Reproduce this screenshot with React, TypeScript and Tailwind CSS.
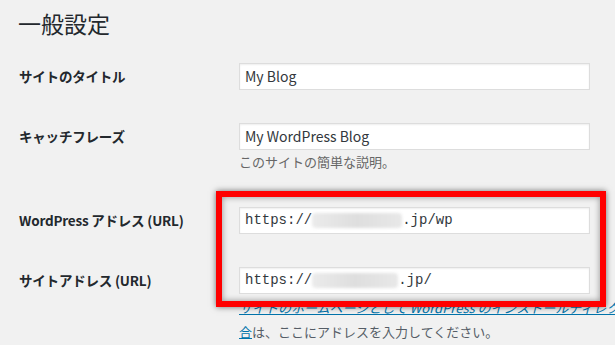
import React from 'react';

const jp = "font-['Noto_Sans_CJK_JP',sans-serif]";
const mono = "font-['Liberation_Mono','DejaVu_Sans_Mono',monospace]";

const Blur = ({ w }: { w: number }) => (
    <span
        className="inline-block h-[15px] align-middle rounded-sm bg-gradient-to-r from-[#ebebeb] via-[#dedede] to-[#e8e8e8] blur-[1.5px]"
        style={{ width: w }}
    />
);

const Field = ({ children, mono: isMono }: { children: React.ReactNode; mono?: boolean }) => (
    <div
        className={`w-[351px] h-[27px] flex items-center pl-[5px] bg-white border border-[#dddddd] shadow-[inset_0_1px_2px_rgba(0,0,0,0.07)] text-[14px] text-[#32373c] whitespace-nowrap ${isMono ? mono + ' text-[13px]' : ''}`}
    >
        {children}
    </div>
);

const Row = ({ label, children, className = '' }: { label: string; children: React.ReactNode; className?: string }) => (
    <div className={`flex items-center ${className}`}>
        <div className="w-[239px] pl-[19px] text-[13.5px] font-bold tracking-[-0.2px] text-[#23282d]">{label}</div>
        {children}
    </div>
);

export default function App() {
    return (
        <div className={`relative w-[615px] h-[345px] overflow-hidden bg-[#f1f1f1] ${jp}`}>
            <h1 className="pt-[9px] pl-[18px] text-[23px] leading-[29px] font-normal text-[#23282d]">一般設定</h1>

            <Row label="サイトのタイトル" className="mt-[25px]">
                <Field>My Blog</Field>
            </Row>

            <Row label="キャッチフレーズ" className="mt-[33px]">
                <Field>My WordPress Blog</Field>
            </Row>
            <p className="ml-[239px] mt-[3px] text-[13px] leading-[18px] text-[#666666]">このサイトの簡単な説明。</p>

            <Row label="WordPress アドレス (URL)" className="mt-[36px]">
                <Field mono>
                    https://<Blur w={90} />.jp/wp
                </Field>
            </Row>

            <Row label="サイトアドレス (URL)" className="mt-[33px]">
                <Field mono>
                    https://<Blur w={86} />.jp/
                </Field>
            </Row>

            <p className="ml-[239px] mt-[2px] text-[13px] leading-[24px] text-[#555d66] whitespace-nowrap">
                <a href="#" className="text-[#0073aa] underline italic">
                    サイトのホームページとして WordPress のインストールディレクトリとは異なる場所を使いたい場
                </a>
                <br />
                <a href="#" className="text-[#0073aa] underline">合</a>は、ここにアドレスを入力してください。
            </p>

            {/* 赤枠の注釈 */}
            <div className="absolute left-[216px] top-[191px] w-[390px] h-[116px] border-[6px] border-[#ff0000] shadow-[0_0_6px_rgba(0,0,0,0.55),inset_0_0_6px_rgba(0,0,0,0.4)]" />
        </div>
    );
}
